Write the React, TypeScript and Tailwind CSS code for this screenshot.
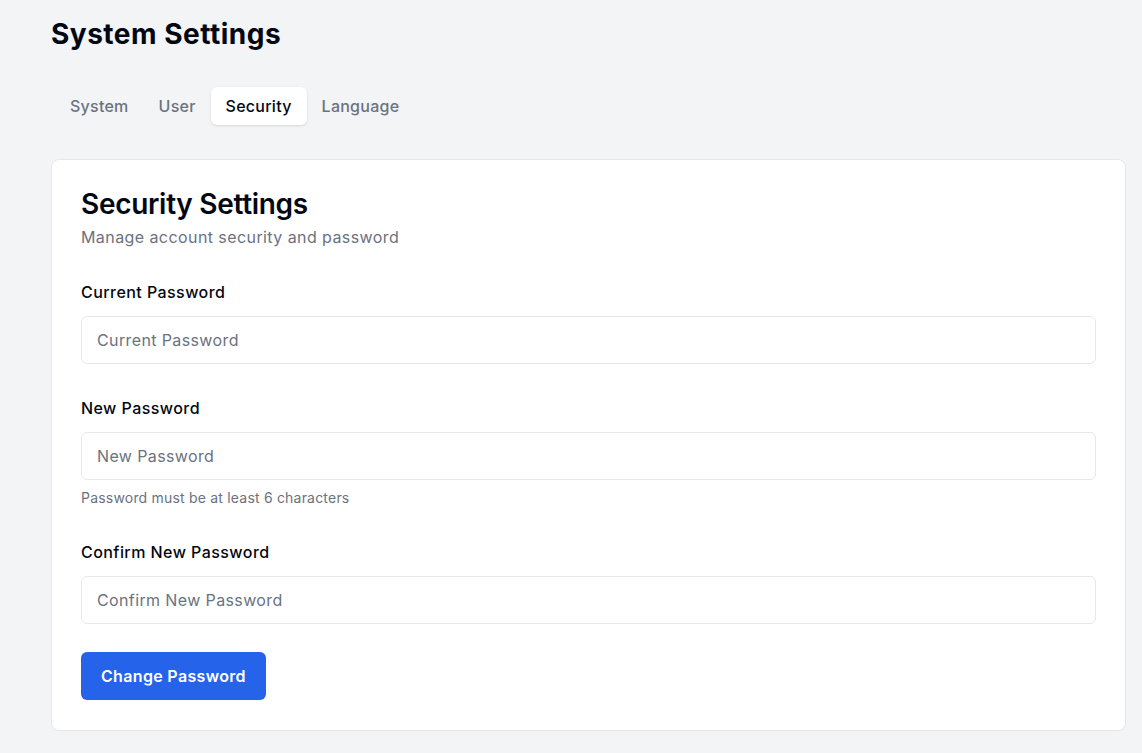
import { useState } from "react";

const tabs = ["System", "User", "Security", "Language"];

function Field({
  label,
  placeholder,
  hint,
}: {
  label: string;
  placeholder: string;
  hint?: string;
}) {
  return (
    <div className="flex flex-col">
      <label className="text-base font-medium leading-6 tracking-[0.44px] text-[#030712]">{label}</label>
      <input
        type="password"
        placeholder={placeholder}
        className="mt-3 h-12 w-full rounded-md border border-[#e5e7eb] bg-white px-[15px] text-base tracking-[0.38px] text-gray-900 placeholder:text-[#6b7280] outline-none"
      />
      {hint && <p className="mt-2 text-sm leading-5 tracking-[0.2px] text-[#6b7280]">{hint}</p>}
    </div>
  );
}

export default function App() {
  const [active, setActive] = useState("Security");

  return (
    <div
      className="min-h-screen bg-[#f3f4f6] pl-[51px] pr-4 pt-4 pb-6"
      style={{ fontFamily: "Inter, 'Noto Sans', sans-serif" }}
    >
      <h1 className="text-[28px] font-bold leading-9 tracking-[0.5px] text-[#030712]">System Settings</h1>

      <div className="mt-[31px] inline-flex items-center p-1">
        {tabs.map((t) => (
          <button
            key={t}
            type="button"
            onClick={() => setActive(t)}
            className={
              t === active
                ? "h-[38px] rounded-md bg-white px-[15px] text-base font-medium tracking-[0.25px] text-[#030712] shadow-sm"
                : "h-[38px] rounded-md px-[15px] text-base font-medium tracking-[0.25px] text-[#6b7280]"
            }
          >
            {t}
          </button>
        ))}
      </div>

      <div className="mt-[30px] rounded-lg border border-[#e5e7eb] bg-white px-[29px] pt-7 pb-[30px]">
        <h2 className="text-[28px] font-semibold leading-8 tracking-[-0.3px] text-[#030712]">Security Settings</h2>
        <p className="mt-[5px] text-base leading-6 tracking-[0.42px] text-[#6b7280]">
          Manage account security and password
        </p>

        <div className="mt-[31px] flex flex-col gap-8">
          <Field label="Current Password" placeholder="Current Password" />
          <Field
            label="New Password"
            placeholder="New Password"
            hint="Password must be at least 6 characters"
          />
          <Field label="Confirm New Password" placeholder="Confirm New Password" />
        </div>

        <button
          type="button"
          className="mt-7 h-12 rounded-md bg-[#2563eb] px-5 text-base font-semibold tracking-[0.33px] text-white"
        >
          Change Password
        </button>
      </div>
    </div>
  );
}
